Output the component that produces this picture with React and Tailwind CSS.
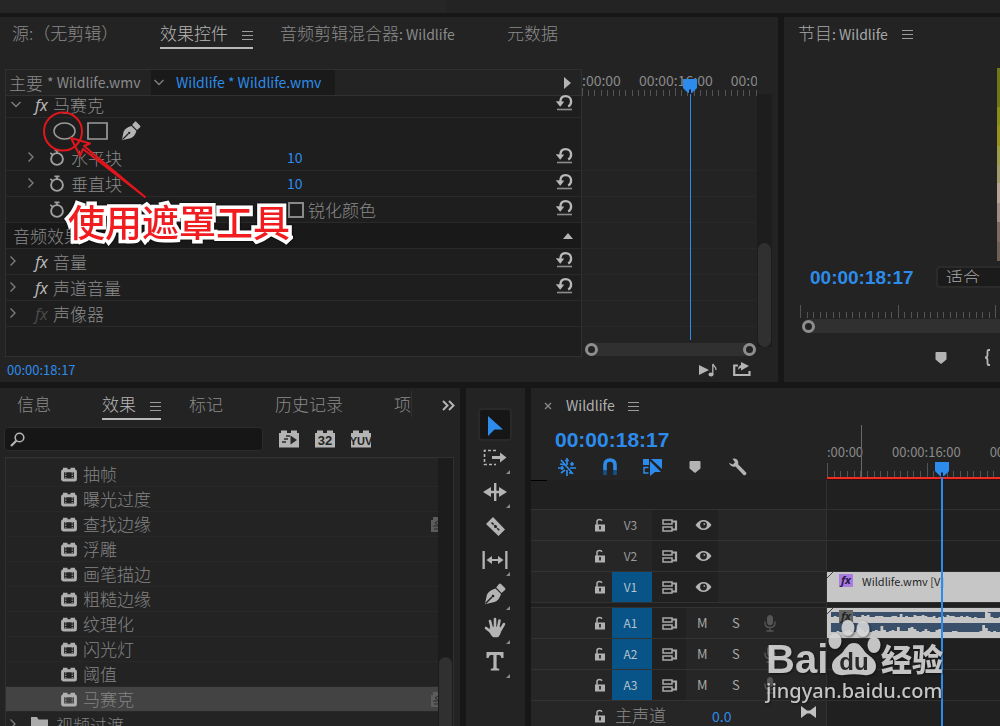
import React from "react";

const EFFECTS = [
  ["抽帧", false],
  ["曝光过度", false],
  ["查找边缘", true],
  ["浮雕", false],
  ["画笔描边", false],
  ["粗糙边缘", false],
  ["纹理化", false],
  ["闪光灯", false],
  ["阈值", false],
  ["马赛克", true],
];

const STRIP = [
  "h-[39px] bg-[#70761a]",
  "h-[19px] bg-[#8a8d1c]",
  "h-[20px] bg-[#9a9122]",
  "h-[19px] bg-[#9d9c48]",
  "h-[19px] bg-[#a39c6a]",
  "h-[20px] bg-[#b8a598]",
  "h-[19px] bg-[#a08d84]",
  "h-[20px] bg-[#7d6a63]",
  "h-[19px] bg-[#6e6055]",
];

function Menu({ className = "" }) {
  return (
    <button aria-label="面板菜单" className={"text-[#9c9c9c] " + className}>
      <svg width="11" height="11" viewBox="0 0 11 11" className="block" fill="none" stroke="currentColor">
        <path d="M0 1.5h11M0 5.5h11M0 9.5h11" />
      </svg>
    </button>
  );
}

function Reset() {
  return (
    <button aria-label="重置" className="block text-[#b9b9b9]">
      <svg width="18" height="18" viewBox="0 0 18 18" className="block" fill="none" stroke="currentColor">
        <path d="M5.300 8.500C5.300 4.500 7.500 2.200 10.500 2.200c3.300 0 5.600 2.200 5.600 5.400 0 2.400-1 4-2.900 5" strokeWidth="2.300" />
        <path d="M.8 7.300l8.200.2-.8 1.500-3 3.700z" fill="currentColor" stroke="none" />
        <path d="M2 15.500h15" strokeWidth="1.600" stroke="#8c8c8c" />
      </svg>
    </button>
  );
}

function Stopwatch() {
  return (
    <button aria-label="切换动画" className="block text-[#a0a0a0]">
      <svg width="16" height="18" viewBox="0 0 16 18" className="block" fill="none" stroke="currentColor">
        <circle cx="8" cy="10" r="5.900" strokeWidth="1.900" />
        <path d="M5.500 1.300h5M8 1.500v3M1.300 3.800l2.500 2" strokeWidth="1.700" />
      </svg>
    </button>
  );
}

function Chevron({ down = false }) {
  return (
    <svg width="10" height="12" viewBox="0 0 10 12" className="block shrink-0 text-[#808080]" fill="none" stroke="currentColor" strokeWidth="1.300">
      {down ? <path d="M.5 3L5 7.500 9.500 3" /> : <path d="M2.500.5L7 5 2.500 9.500" />}
    </svg>
  );
}

function Fx({ dim = false, className = "" }) {
  return (
    <span className={"font-['Noto_Sans',sans-serif] text-[16px] italic leading-5 " + (dim ? "text-[#4a4a4a] " : "text-[#b8b8b8] ") + className}>fx</span>
  );
}

function Pen({ size = 22 }) {
  return (
    <svg width={size} height={size} viewBox="0 0 22 22" className="block" fill="currentColor">
      <path d="M.8 21.200L3 11.500C4.400 8.500 8 6.500 11.500 5.500l5.500 5.500C15.800 15 13.500 18 10.500 19z" />
      <path d="M12.200 4.500l2.800-3.400c.7-.7 1.300-.7 2 0l4 4c.6.600.6 1.200 0 1.800l-3.400 3z" />
      <path d="M1.500 20.500l6.500-6.500" stroke="#1f1f1f" strokeWidth="1.400" />
      <circle cx="9" cy="13" r="1.300" fill="#1f1f1f" />
    </svg>
  );
}

function Marker() {
  return (
    <svg width="14" height="14" viewBox="0 0 14 14" className="block text-[#b4b4b4]" fill="currentColor">
      <path d="M1.500 2q0-1 1-1h9q1 0 1 1v6.500L7 13 1.500 8.500z" />
    </svg>
  );
}

function Ruler({ count, pitch, tall, height, className = "" }) {
  const ticks = Array.from({ length: count }, (_, i) => {
    const x = Math.round(i * pitch) + 0.5;
    return `M${x} ${i % 15 === 0 ? height - tall : height - 6}V${height}`;
  }).join("");
  return (
    <svg width="100%" height={height} className={"block shrink-0 text-[#545454] " + className} stroke="currentColor" fill="none">
      <path d={ticks} />
    </svg>
  );
}

function Playhead() {
  return (
    <svg width="14" height="15" viewBox="0 0 14 15" className="block">
      <path d="M0 0h14v9l-5 5H5L0 9z" fill="#2d8ceb" />
      <path d="M7 10.500v4.500" stroke="#0d1c2c" strokeWidth="2" />
    </svg>
  );
}

function Knob() {
  return <span className="h-[13px] w-[13px] shrink-0 rounded-full border-[3px] border-[#8e8e8e] bg-[#232323]" />;
}

function Brick({ children, label }) {
  return (
    <button aria-label={label} className="text-[#b4b4b4]">
      <svg width="20" height="18" viewBox="0 0 20 18" className="block">
        <path d="M0 3h2V.5h6V3h4V.5h6V3h2v14.500H0z" fill="currentColor" />
        {children}
      </svg>
    </button>
  );
}

function EffectIcon() {
  return (
    <svg width="16" height="15" viewBox="0 0 16 15" className="block shrink-0 text-[#b0b0b0]" fill="none">
      <path d="M2 4V.7h4.500V4M9.500 4V.7H14V4" fill="currentColor" />
      <rect x="1.600" y="3.800" width="12.800" height="9.200" rx="1" stroke="currentColor" strokeWidth="3" />
      <path d="M4.700 5v7M11.300 5v7" stroke="#858585" strokeWidth="1.300" strokeDasharray="1.500 1" />
    </svg>
  );
}

function Accel() {
  return (
    <svg width="7" height="15" viewBox="0 0 7 15" className="block text-[#5c5c5c]">
      <path d="M0 3h2V0h5v15H0z" fill="currentColor" />
      <path d="M7 4L4 6l3 2M2 9h5M3 12h4" stroke="#292929" fill="none" />
    </svg>
  );
}

function ControlRow({ children, reset = true, className = "h-[26px]" }) {
  return (
    <div className={"flex shrink-0 items-center border-b border-[#2a2a2a] pr-2 " + className}>
      {children}
      {reset && <span className="mb-[3px] ml-auto"><Reset /></span>}
    </div>
  );
}

function TopStrip() {
  return (
    <div className="flex h-[13px] shrink-0 bg-[#232323]">
      <div className="w-[446px] bg-[#262626]" />
    </div>
  );
}

function EffectControls() {
  return (
    <section className="relative flex min-w-0 flex-col bg-[#232323]">
      <nav className="flex h-[52px] shrink-0 items-start whitespace-nowrap pl-3 pt-[3px] text-[17px] font-light leading-[26px] text-[#8a8a8a]">
        <button className="w-[148px] text-left">源:（无剪辑）</button>
        <div className="mr-[27px] flex w-[93px] items-center justify-between border-b-2 border-[#b8b8b8] pb-px text-[#b5b5b5]">
          <button>效果控件</button>
          <Menu className="pt-1" />
        </div>
        <button className="w-[227px] text-left">音频剪辑混合器<span className="text-[14px] font-normal">: Wildlife</span></button>
        <button>元数据</button>
      </nav>
      <div className="flex h-[288px] shrink-0 pl-[5px] pr-[6px]">
        <div className="flex min-w-0 flex-1 flex-col border border-[#303030] bg-[#1e1e1e]">
          <div className="flex h-[26px] shrink-0 items-center border-b border-[#303030] bg-[#232323] text-[14px]">
            <button className="flex w-[145px] items-center gap-1 whitespace-nowrap pl-[3px] text-[#8a8a8a]">
              <span className="text-[17px] font-light leading-6">主要</span>
              <span>* Wildlife.wmv</span>
            </button>
            <button className="flex h-full w-[184px] items-center gap-3 whitespace-nowrap bg-[#1a1a1a] pl-[3px] text-[#2d8ceb]">
              <Chevron down />
              <span>Wildlife * Wildlife.wmv</span>
            </button>
            <button aria-label="显示时间轴" className="ml-auto mr-[10px] text-[#b4b4b4]">
              <svg width="7" height="12" viewBox="0 0 7 12" className="block"><path d="M0 0l7 6-7 6z" fill="currentColor" /></svg>
            </button>
          </div>
          <ControlRow className="h-[22px] pb-1 pl-[5px]">
            <Chevron down />
            <Fx className="ml-[14px] w-[18px]" />
            <span className="text-[17px] font-light leading-[18px] text-[#8a8a8a]">马赛克</span>
          </ControlRow>
          <div className="flex h-[27px] shrink-0 items-center gap-[11px] pb-px pl-[47px] text-[#9a9a9a]">
            <button aria-label="椭圆蒙版"><svg width="23" height="18" viewBox="0 0 23 18" className="block" fill="none" stroke="currentColor" strokeWidth="1.500"><ellipse cx="11.500" cy="9" rx="10.500" ry="8" /></svg></button>
            <button aria-label="矩形蒙版"><svg width="21" height="18" viewBox="0 0 21 18" className="block" fill="none" stroke="currentColor" strokeWidth="1.700"><path d="M1 1h19v16H1z" /></svg></button>
            <button aria-label="钢笔蒙版" className="ml-[2px] text-[#b4b4b4]"><Pen size={20} /></button>
          </div>
          {["水平块", "垂直块"].map((name) => (
            <ControlRow key={name} className="h-[26px] pl-5">
              <Chevron />
              <span className="ml-[13px] mr-[6px]"><Stopwatch /></span>
              <span className="w-[216px] text-[17px] font-light text-[#8a8a8a]">{name}</span>
              <span className="text-[14px] text-[#2d8ceb]">10</span>
            </ControlRow>
          ))}
          <ControlRow className="h-[26px] pl-[43px]">
            <Stopwatch />
            <label className="ml-[223px] flex items-center gap-1 text-[17px] font-light text-[#8a8a8a]">
              <input type="checkbox" className="h-[16px] w-[16px] appearance-none border-2 border-[#8a8a8a]" />
              锐化颜色
            </label>
          </ControlRow>
          <ControlRow reset={false} className="h-[26px] bg-[#191919] pl-[7px]">
            <span className="text-[17px] font-light text-[#8a8a8a]">音频效果</span>
            <svg width="10" height="6" viewBox="0 0 10 6" className="ml-auto block text-[#b4b4b4]"><path d="M5 0l5 6H0z" fill="currentColor" /></svg>
          </ControlRow>
          {["音量", "声道音量", "声像器"].map((name, i) => (
            <ControlRow key={name} reset={i < 2} className="h-[26px] pl-[2px]">
              <Chevron />
              <Fx dim={i === 2} className="ml-[17px] w-[18px]" />
              <span className="text-[17px] font-light text-[#8a8a8a]">{name}</span>
            </ControlRow>
          ))}
        </div>
        <div className="relative flex w-[175px] flex-col">
          <div className="flex h-[27px] flex-col justify-end overflow-hidden">
            <div className="flex gap-[18px] whitespace-nowrap text-[14px] leading-[16px] text-[#8a8a8a]">
              <span>:00:00</span><span>00:00:16:00</span><span>00:00:24:00</span>
            </div>
            <Ruler count={29} pitch={6.2} tall={8} height={8} />
          </div>
          <div className="h-[75px] border-b border-[#282828]" />
          {[0, 1, 2, 3, 4, 5].map((i) => <div key={i} className="h-[26px] border-b border-[#282828]" />)}
          <div className="mb-px mt-auto flex h-[13px] items-center pl-[3px] pr-px">
            <div className="flex h-full flex-1 items-center justify-between rounded-full bg-[#303030]"><Knob /><Knob /></div>
          </div>
          <div className="absolute left-[101px] top-[10px] flex flex-col items-center">
            <Playhead />
            <div className="h-[246px] w-px bg-[#2d8ceb]" />
          </div>
        </div>
        <div className="mb-[10px] mt-[25px] flex w-[15px] flex-col justify-end bg-[#1d1d1d] px-px">
          <div className="h-[104px] rounded-full bg-[#303030]" />
        </div>
      </div>
      <div className="flex flex-1 items-center pl-[7px] pr-[27px] text-[13px] text-[#2d8ceb]">
        <span>00:00:18:17</span>
        <button aria-label="仅播放音频" className="ml-auto mr-[15px] text-[#b4b4b4]">
          <svg width="19" height="14" viewBox="0 0 19 14" className="block">
            <path d="M0 2l10 5-10 5z" fill="currentColor" />
            <ellipse cx="12" cy="11.500" rx="2.500" ry="2" fill="currentColor" />
            <path d="M13.800 11.500V1c.5 2.500 4 2.500 3 6" fill="none" stroke="currentColor" strokeWidth="1.300" />
          </svg>
        </button>
        <button aria-label="导出" className="text-[#b4b4b4]">
          <svg width="18" height="15" viewBox="0 0 18 15" className="block">
            <path d="M5 3.500H1.200V13H16.500V9" fill="none" stroke="currentColor" strokeWidth="2.200" />
            <path d="M8 0l8 4-8 4.500V6q-2 0-3 2 0-4 3-5z" fill="currentColor" />
          </svg>
        </button>
      </div>
    </section>
  );
}

function Program() {
  return (
    <section className="flex min-w-0 flex-col overflow-hidden bg-[#232323]">
      <div className="flex h-[51px] shrink-0 items-start pl-[14px] pt-[3px] leading-[26px] text-[#a8a8a8]">
        <span className="whitespace-nowrap text-[17px] font-light">节目<span className="text-[14px] font-normal">: Wildlife</span></span>
        <Menu className="ml-[14px] mt-[9px]" />
      </div>
      <div className="flex h-[193px] shrink-0 flex-col items-end">
        {STRIP.map((c) => <div key={c} className={"w-[3px] " + c} />)}
      </div>
      <div className="mt-[5px] flex h-[22px] shrink-0 items-center pl-[26px]">
        <span className="w-[126px] pt-[2px] font-['Liberation_Sans',Arial,sans-serif] text-[19px] font-bold text-[#2d8ceb]">00:00:18:17</span>
        <select aria-label="选择缩放级别" className="h-[22px] flex-1 appearance-none rounded-l border-2 border-r-0 border-[#2b2b2b] bg-[#1b1b1b] pb-[3px] pl-2 text-[17px] font-light leading-none text-[#a8a8a8]">
          <option>适合</option>
        </select>
      </div>
      <Ruler count={31} pitch={6.5} tall={13} height={13} className="ml-4 mt-[17px]" />
      <div className="ml-[18px] mt-px flex h-[14px] shrink-0 items-center rounded-l-full bg-[#303030]"><Knob /></div>
      <div className="mt-[16px] flex shrink-0 items-center justify-end gap-[35px] pr-px">
        <button aria-label="添加标记"><Marker /></button>
        <button aria-label="标记入点" className="text-[#b4b4b4]">
          <svg width="16" height="17" viewBox="0 0 16 17" className="block" fill="none" stroke="currentColor" strokeWidth="1.800"><path d="M7 1H5.500Q4.500 1 4.500 3v3q0 2.500-2.500 2.500 2.500 0 2.500 2.500v3q0 2 1 2H7" /></svg>
        </button>
      </div>
    </section>
  );
}

function EffectsPanel() {
  return (
    <section className="flex min-w-0 flex-col overflow-hidden bg-[#232323]">
      <nav className="flex h-[39px] shrink-0 items-start whitespace-nowrap pl-[17px] pt-[3px] text-[17px] font-light leading-[26px] text-[#8a8a8a]">
        <button className="mr-[51px]">信息</button>
        <div className="mr-7 flex w-[59px] items-center justify-between border-b-2 border-[#b8b8b8] pb-px text-[#b5b5b5]">
          <button>效果</button>
          <Menu className="pt-1" />
        </div>
        <button className="mr-[52px]">标记</button>
        <button className="mr-[51px]">历史记录</button>
        <button className="border-r border-[#303030]">项</button>
        <button aria-label="更多面板" className="ml-auto mr-[5px] mt-[9px] text-[#b4b4b4]">
          <svg width="13" height="11" viewBox="0 0 13 11" className="block" fill="none" stroke="currentColor" strokeWidth="2"><path d="M1 1l4.500 4.500L1 10M7 1l4.500 4.500L7 10" /></svg>
        </button>
      </nav>
      <div className="flex h-6 shrink-0 items-center gap-4 pl-1">
        <label className="flex h-6 w-[259px] items-center gap-1 rounded border border-[#2c2c2c] bg-[#161616] pl-[5px] text-[#b4b4b4]">
          <svg width="15" height="15" viewBox="0 0 15 15" className="block shrink-0" fill="none" stroke="currentColor"><circle cx="9.500" cy="5.500" r="4.300" strokeWidth="1.600" /><path d="M6.300 8.700L1 14" strokeWidth="2.200" /></svg>
          <input aria-label="搜索效果" className="min-w-0 flex-1 bg-transparent text-[14px] outline-none" />
        </label>
        <Brick label="加速效果">
          <path d="M7 6h4M5 9h4M3 12h4" stroke="#2a2a2a" strokeWidth="1.300" /><path d="M11.500 5.500l6.500 4.500-6.500 4.500z" fill="#2a2a2a" />
        </Brick>
        <Brick label="32 位颜色">
          <text x="10" y="15" textAnchor="middle" fill="#232323" className="font-['Liberation_Sans',Arial,sans-serif] text-[13px] font-bold">32</text>
        </Brick>
        <Brick label="YUV 效果">
          <text x="10" y="15" textAnchor="middle" fill="#232323" className="font-['Liberation_Sans_Narrow',sans-serif] text-[11px] font-bold">YUV</text>
        </Brick>
      </div>
      <div className="ml-[5px] mr-[6px] mt-[6px] flex min-h-0 flex-1 border border-b-0 border-[#303030]">
        <ul className="min-w-0 flex-1 overflow-hidden border-t border-[#282828] pt-[3px]">
          {EFFECTS.map(([name, accel], i) => (
            <li key={name} className={"flex h-[25px] items-center gap-[6px] border-b border-[#282828] pl-[55px] text-[17px] font-light text-[#848484] " + (i === 9 ? "bg-[#434343]" : "")}>
              <EffectIcon />
              <span className="leading-6">{name}</span>
              {accel && <span className="ml-auto"><Accel /></span>}
            </li>
          ))}
          <li className="flex h-[25px] items-center pl-[2px] text-[17px] font-light text-[#848484]">
            <Chevron />
            <svg width="19" height="15" viewBox="0 0 19 15" className="ml-[12px] mr-[7px] block text-[#ababab]"><path d="M1 0h6l1.500 2.500H18V15H1z" fill="currentColor" /></svg>
            视频过渡
          </li>
        </ul>
        <div className="flex w-[15px] flex-col bg-[#1c1c1c] px-px pt-[199px]"><div className="flex-1 rounded-t-full bg-[#303030]" /></div>
      </div>
    </section>
  );
}

const TOOLS = [
  ["选择工具", <path key="a" d="M5 3l15 13.500H11.500L5 23z" fill="#2d8ceb" />],
  ["轨道选择工具", <g key="b"><path d="M13 4.500H1.500V18.500H13" fill="none" stroke="currentColor" strokeWidth="1.600" strokeDasharray="3 2" /><path d="M9 10h8V6.500l6.500 5-6.500 5V13H9z" fill="currentColor" /></g>],
  ["波纹编辑工具", <path key="c" d="M11 3h2.400v18H11zM0 12l8-5v3.800h8V7l8 5-8 5v-3.800H8V17z" fill="currentColor" />],
  ["剃刀工具", <g key="d"><path d="M10 3l12 12.500-6.500 6.500L3 10z" fill="currentColor" /><path d="M8.500 8.500l8 8" stroke="#232323" strokeWidth="1.500" strokeDasharray="3 1" /><circle cx="12.500" cy="12.500" r="1.500" fill="#232323" /></g>],
  ["外滑工具", <g key="e" fill="currentColor"><path d="M-.5 3h2.300v18H-.5zM22.200 3h2.300v18h-2.300z" /><path d="M3.500 12L9 8v3h6V8l5.500 4-5.500 4v-3H9v3z" /></g>],
  ["钢笔工具", null],
  ["手形工具", <g key="g" fill="none" stroke="currentColor" strokeLinecap="round" strokeWidth="2.600"><path d="M8.800 12L7 5M12 11V3M15 12l1.500-7.500M17.500 14l3.500-6M8 16l-5-4" /><path d="M8 12h8.500q1.500 4-2.200 8h-3.500Q8.500 18 7.500 15z" fill="currentColor" /></g>],
  ["文字工具", <path key="h" d="M3.500 2h17v6h-2.200q-.3-3-2.300-3h-2.400v12.500q0 1.200 2.600 1.300V20.500H7.800v-1.700q2.600-.1 2.600-1.300V5H8Q6 5 5.700 8H3.500z" fill="currentColor" />],
];

function Toolbar() {
  return (
    <section className="flex flex-col items-center bg-[#232323] pr-[2px] pt-5">
      {TOOLS.map(([label, drawing], i) => (
        <button
          key={label}
          aria-label={label}
          className={"relative flex w-[34px] shrink-0 items-center justify-center rounded border-2 text-[#b4b4b4] " + (i === 0 ? "h-[33px] border-[#292929] bg-[#161616]" : "h-[34px] border-transparent")}
        >
          {drawing ? <svg width="24" height="24" viewBox="0 0 24 24" className="block shrink-0 overflow-visible">{drawing}</svg> : <Pen size={22} />}
          {i !== 0 && i !== 3 && (
            <svg width="4" height="4" viewBox="0 0 4 4" className="absolute -bottom-px right-0"><path d="M4 0v4H0z" fill="#8a8a8a" /></svg>
          )}
        </button>
      ))}
    </section>
  );
}

function Lock() {
  return (
    <button aria-label="切换轨道锁定" className="text-[#b0b0b0]">
      <svg width="12" height="15" viewBox="0 0 12 15" className="block">
        <path d="M3 7V3.500Q3 1.500 5.500 1.500T7.500 3" fill="none" stroke="currentColor" strokeWidth="1.500" />
        <path d="M1 6.500h10v7H1z" fill="currentColor" />
        <path d="M6 8v3.500" stroke="#262626" strokeWidth="1.800" />
      </svg>
    </button>
  );
}

function SyncLock() {
  return (
    <button aria-label="切换同步锁定" className="text-[#a8a8a8]">
      <svg width="16" height="13" viewBox="0 0 16 13" className="block" fill="none" stroke="currentColor" strokeWidth="1.500">
        <path d="M1 1h9v4H1zM1 8h9v4H1z" /><path d="M10 2.500h4v8h-4" strokeWidth="2.200" />
      </svg>
    </button>
  );
}

function Eye() {
  return (
    <button aria-label="切换轨道输出" className="text-[#b4b4b4]">
      <svg width="17" height="12" viewBox="0 0 17 12" className="block">
        <path d="M.5 6Q4 1 8.500 1T16.500 6Q13 11 8.500 11T.5 6z" fill="currentColor" />
        <circle cx="8.500" cy="6" r="3.400" fill="#232323" /><circle cx="9.300" cy="5" r=".9" fill="#9a9a9a" />
      </svg>
    </button>
  );
}

function Mic() {
  return (
    <svg width="12" height="17" viewBox="0 0 12 17" className="block text-[#565656]" fill="none" stroke="currentColor">
      <rect x="3.500" y=".5" width="5" height="9.500" rx="2.500" fill="currentColor" />
      <path d="M1 6.500V8q0 4.500 5 4.500T11 8V6.500M6 12.500v3M2.500 16h7" strokeWidth="1.400" />
    </svg>
  );
}

function TrackHead({ name, audio = false, patched = false }) {
  return (
    <div className="flex h-[31px] shrink-0 border-t border-[#323232] bg-[#262626]">
      <span className="flex w-[81px] items-center justify-end pr-[6px]"><Lock /></span>
      <button className={"w-10 pr-[3px] text-[12px] " + (patched ? "bg-[#085488] text-[#b5c3cc]" : "text-[#9a9a9a]")}>{name}</button>
      <span className={"flex items-center bg-[#212121] pl-[10px] " + (audio ? "w-[34px]" : "w-[66px] gap-[17px]")}>
        <SyncLock />
        {!audio && <Eye />}
      </span>
      {audio && (
        <span className="flex items-center pl-[11px] text-[13px] text-[#a8a8a8]">
          <button className="w-[35px] text-left">M</button>
          <button className="w-8 text-left">S</button>
          <Mic />
        </span>
      )}
    </div>
  );
}

const PEAKS_TOP = [1, 2, 1, 0, 1, 3, 1, 1, 2, 1, 1, 3, 2, 3, 1, 1, 2, 2, 2, 1, 1, 1, 2, 2, 1, 4, 1, 2, 1, 1, 3, 2, 2, 3, 2, 1, 1, 2, 0, 1, 2, 1, 3, 2, 2, 1, 1, 2, 1, 2, 1, 0, 1, 0, 0, 0, 6, 5, 1, 0, 0, 1];
const PEAKS_BOTTOM = [0, 0, 1, 0, 0, 1, 2, 0, 0, 2, 4, 2, 0, 2, 0, 1, 2, 1, 6, 2, 0, 1, 2, 1, 5, 1, 1, 1, 4, 5, 3, 1, 0, 1, 3, 1, 0, 0, 2, 3, 0, 0, 0, 0, 1, 1, 0, 0, 0, 0, 0, 0, 0, 0, 1, 7, 4, 1, 0, 1, 0, 0];

function wave(peaks, base) {
  return peaks.map((p, i) => `M${i * 2.75} ${base}v-${p + 1}h2.75v${p + 1}z`).join("");
}

function Timeline() {
  return (
    <section className="flex min-w-0 flex-col overflow-hidden bg-[#232323]">
      <div className="flex h-[92px] shrink-0">
        <div className="flex w-[296px] shrink-0 flex-col">
          <div className="flex h-[34px] items-center pl-[13px] text-[14px] text-[#b0b0b0]">
            <button aria-label="关闭" className="mr-[14px] pt-[2px] text-[#8a8a8a]">
              <svg width="8" height="8" viewBox="0 0 8 8" className="block" stroke="currentColor" strokeWidth="1.300"><path d="M1 1l6 6M7 1L1 7" /></svg>
            </button>
            <span className="w-[62px]">Wildlife</span>
            <Menu className="pt-[3px]" />
          </div>
          <span className="pl-6 font-['Liberation_Sans',Arial,sans-serif] text-[21px] font-bold leading-[36px] text-[#2d8ceb]">00:00:18:17</span>
          <div className="flex items-center pl-[27px] text-[#2d8ceb]">
            <button aria-label="嵌套序列" className="mr-[26px]">
              <svg width="18" height="18" viewBox="0 0 18 18" className="block" fill="none" stroke="currentColor" strokeWidth="1.700"><path d="M9 0v7M9 12v6M7 2.500h4M0 10h6M12 10h6M3 2l12 14M2 6l5 1M12 6h4M3 15l4-3M14 4v4M4 8v4M11 15h3" /></svg>
            </button>
            <button aria-label="对齐" className="mr-[25px]">
              <svg width="16" height="18" viewBox="0 0 16 18" className="block" fill="none" stroke="currentColor" strokeWidth="3.600"><path d="M3 12V7q0-5 5-5t5 5v5" /><path d="M3 12v5M13 12v5" stroke="#155089" /></svg>
            </button>
            <button aria-label="链接选择项" className="mr-[26px]">
              <svg width="19" height="18" viewBox="0 0 19 18" className="block" fill="currentColor"><path d="M0 1h6v6H0zM8 1h11v10L8 1zM7 3l11 11h-6l-5 4z" /><path d="M5.500 9.500H1V15h4.500" fill="none" stroke="currentColor" strokeWidth="1.500" /></svg>
            </button>
            <button aria-label="添加标记" className="mr-[26px]"><Marker /></button>
            <button aria-label="时间轴显示设置" className="text-[#b4b4b4]">
              <svg width="19" height="18" viewBox="0 0 19 18" className="block" fill="currentColor"><path d="M4.500.8Q9-.2 10.300 4q.1 1-.2 2.200l8 8.300q.8 1.500-.6 2.500-1.200.8-2.200-.2L7.500 8.600Q3 9.800 1 4.800l3.800 1.700L7 4.200z" /></svg>
            </button>
          </div>
        </div>
        <div className="relative flex min-w-0 flex-1 flex-col justify-end overflow-hidden">
          <div className="mb-[2px] flex gap-[29px] whitespace-nowrap text-[13px] leading-[18px] text-[#8a8a8a]">
            <span className="w-[38px]">:00:00</span><span>00:00:16:00</span><span>00:00:24:00</span>
          </div>
          <Ruler count={28} pitch={6.65} tall={14} height={14} />
          <div className="h-[3px] shrink-0 border-b border-[#3a0c0a] bg-[#ee2d24]" />
          <div className="absolute left-[34px] top-[37px] h-[52px] w-px bg-[#6a6a6a]" />
        </div>
      </div>
      <div className="flex min-h-0 flex-1">
        <div className="flex w-[296px] shrink-0 flex-col border-r border-[#303030]">
          <div className="h-[29px] shrink-0 bg-[#202020]"><div className="h-px w-4 bg-black" /></div>
          <TrackHead name="V3" />
          <TrackHead name="V2" />
          <TrackHead name="V1" patched />
          <div className="h-[5px] shrink-0 border-t border-[#323232] bg-[#202020]" />
          <TrackHead name="A1" audio patched />
          <TrackHead name="A2" audio patched />
          <TrackHead name="A3" audio patched />
          <div className="flex h-[31px] shrink-0 items-center border-t border-[#323232] bg-[#262626] pl-[63px]">
            <Lock />
            <span className="ml-[9px] w-[97px] pb-[3px] text-[17px] font-light leading-6 text-[#8a8a8a]">主声道</span>
            <span className="text-[14px] text-[#2d8ceb]">0.0</span>
            <svg width="15" height="12" viewBox="0 0 15 12" className="-mt-2 ml-auto mr-[10px] block text-[#c0c0c0]"><path d="M0 0l6 4.500h3L15 0v12L9 7.500H6L0 12z" fill="currentColor" /></svg>
          </div>
        </div>
        <div className="relative flex min-w-0 flex-1 flex-col bg-[#202020]">
          <div className="h-[29px] shrink-0" />
          <div className="h-[31px] shrink-0 border-t border-[#303030]" />
          <div className="h-[31px] shrink-0 border-t border-[#303030]" />
          <div className="flex h-[31px] shrink-0 items-start gap-[9px] whitespace-nowrap border-t border-[#303030] bg-[#c6c6c6] pl-3 pt-[2px] text-[11px] leading-[14px] text-[#262626]">
            <span className="h-[13px] w-[14px] bg-[#a97ce2] pl-[2px] font-['Noto_Sans',sans-serif] font-bold italic leading-[12px] text-[#2b1745]">fx</span>
            Wildlife.wmv [V]
          </div>
          <div className="h-[5px] shrink-0 border-t border-[#303030]" />
          <div className="relative flex h-[31px] shrink-0 flex-col border-t border-[#303030] bg-[#c6c6c6] pl-[4px] pt-1">
            <svg width="100%" height="22" viewBox="0 0 169 22" preserveAspectRatio="xMinYMin slice" className="block">
              <path d="M0 0h400v7H0zM0 11h400v10H0z" fill="#3a4f69" />
              <path d={wave(PEAKS_TOP, 7)} fill="#c6c6c6" />
              <path d={wave(PEAKS_BOTTOM, 21)} fill="#c6c6c6" />
            </svg>
            <span className="absolute left-3 top-[2px] h-[13px] w-[14px] bg-[#666] pl-[2px] font-['Noto_Sans',sans-serif] text-[11px] font-bold italic leading-[12px] text-[#222]">fx</span>
          </div>
          <div className="h-[31px] shrink-0 border-t border-[#303030]" />
          <div className="h-[31px] shrink-0 border-t border-[#303030]" />
          <div className="h-[31px] shrink-0 border-t border-[#303030]" />
          <svg width="6" height="6" className="absolute left-0 top-[92px]"><path d="M0 6l6-6" stroke="#444" /></svg>
          <svg width="6" height="6" className="absolute left-0 top-[128px]"><path d="M0 6l6-6" stroke="#444" /></svg>
          <div className="absolute -top-[18px] bottom-0 left-[108px] flex flex-col items-center">
            <Playhead />
            <div className="w-[2px] flex-1 bg-[#2d8ceb]" />
          </div>
        </div>
      </div>
    </section>
  );
}

function Annotation() {
  return (
    <div className="pointer-events-none absolute left-0 top-0">
      <svg width="300" height="260" viewBox="0 0 300 260" className="block" fill="none" stroke="#e0161c" strokeWidth="2">
        <circle cx="63" cy="131.500" r="19" />
        <path d="M145 197L84 146l6-2.500-19-5.500 9 18 3-7z" strokeLinejoin="round" />
      </svg>
      <span className="absolute left-[68px] top-[197px] whitespace-nowrap text-[37px] font-medium leading-[48px] text-[#f01c20] [-webkit-text-stroke:7px_white] [paint-order:stroke_fill] drop-shadow-[0_0_1px_#000]">使用遮罩工具</span>
    </div>
  );
}

function Watermark() {
  return (
    <div className="pointer-events-none absolute left-[766px] top-[619px] text-[#d6d6d6] opacity-90 drop-shadow-[1px_1px_1px_#0008]">
      <div className="flex h-[60px] items-end">
        <span className="w-[61px] pb-px font-['Liberation_Sans',Arial,sans-serif] text-[40px] font-bold leading-[38px]">Bai</span>
        <svg width="54" height="60" viewBox="0 0 54 60" className="block">
          <g fill="currentColor">
            <ellipse cx="8" cy="22" rx="6.500" ry="8" /><ellipse cx="21" cy="9" rx="6.500" ry="8" /><ellipse cx="36" cy="10" rx="6.500" ry="8" /><ellipse cx="47" cy="26" rx="6.500" ry="8" />
            <path d="M27 24c6 0 8 5 12 10 5 4 10 7 10 13 0 7-6 10-12 9-7-1-13-1-20 0-6 1-12-2-12-9 0-6 5-9 10-13 4-5 6-10 12-10z" />
          </g>
          <text x="27" y="51" textAnchor="middle" fill="#2a2a2a" className="font-['Liberation_Sans',Arial,sans-serif] text-[24px] font-bold">du</text>
        </svg>
        <span className="text-[31px] font-black leading-[42px]">经验</span>
      </div>
      <div className="font-['Noto_Sans',sans-serif] text-[20px] font-medium leading-[24px]">jingyan.baidu.com</div>
    </div>
  );
}

export default function App() {
  return (
    <main className="relative flex h-screen flex-col overflow-hidden bg-[#171717] font-['Noto_Sans_CJK_SC',sans-serif]">
      <TopStrip />
      <div className="mt-1 grid h-[365px] shrink-0 grid-cols-[778fr_216fr] gap-[6px]">
        <EffectControls />
        <Program />
      </div>
      <div className="mt-[6px] grid min-h-0 flex-1 grid-cols-[460fr_59px_469fr] gap-[6px]">
        <EffectsPanel />
        <Toolbar />
        <Timeline />
      </div>
      <Annotation />
      <Watermark />
    </main>
  );
}
